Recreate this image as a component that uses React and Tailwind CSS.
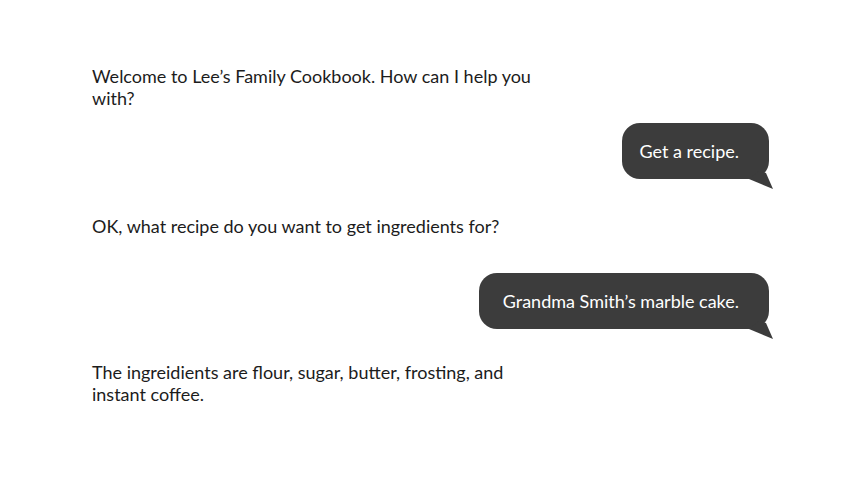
import React from 'react';

const messages = [
  { from: 'bot', text: 'Welcome to Lee’s Family Cookbook. How can I help you with?' },
  { from: 'user', text: 'Get a recipe.', pad: 'pl-[17px]' },
  { from: 'bot', text: 'OK, what recipe do you want to get ingredients for?' },
  { from: 'user', text: 'Grandma Smith’s marble cake.', pad: 'pl-[24px]' },
  { from: 'bot', text: 'The ingreidients are flour, sugar, butter, frosting, and instant coffee.' },
];

const Bubble = ({ text, pad }) => (
  <div className="flex justify-end pr-[77px]">
    <div className={`relative h-[56px] flex items-center pb-[1px] ${pad} pr-[30px] rounded-[18px] bg-[#3c3c3c] text-white`}>
      <span>{text}</span>
      {/* tail */}
      <svg
        className="absolute right-[-6px] bottom-[-10px]"
        width="26"
        height="18"
        viewBox="0 0 26 18"
      >
        <polygon points="0,8 24,18 17,2 10,0" fill="#3c3c3c" />
      </svg>
    </div>
  </div>
);

const App = () => {
  return (
    <div
      className="min-h-screen bg-white text-[18px] leading-[22px] text-[#1c1c1c] pt-[65px]"
      style={{ fontFamily: 'Lato, "Open Sans", sans-serif' }}
    >
      <div className="flex flex-col">
        <p className="pl-[92px] max-w-[548px]">{messages[0].text}</p>
        <div className="mt-[14px]">
          <Bubble text={messages[1].text} pad={messages[1].pad} />
        </div>
        <p className="pl-[92px] max-w-[548px] mt-[36px]">{messages[2].text}</p>
        <div className="mt-[36px]">
          <Bubble text={messages[3].text} pad={messages[3].pad} />
        </div>
        <p className="pl-[92px] max-w-[548px] mt-[32px]">{messages[4].text}</p>
      </div>
    </div>
  );
};

export default App;
